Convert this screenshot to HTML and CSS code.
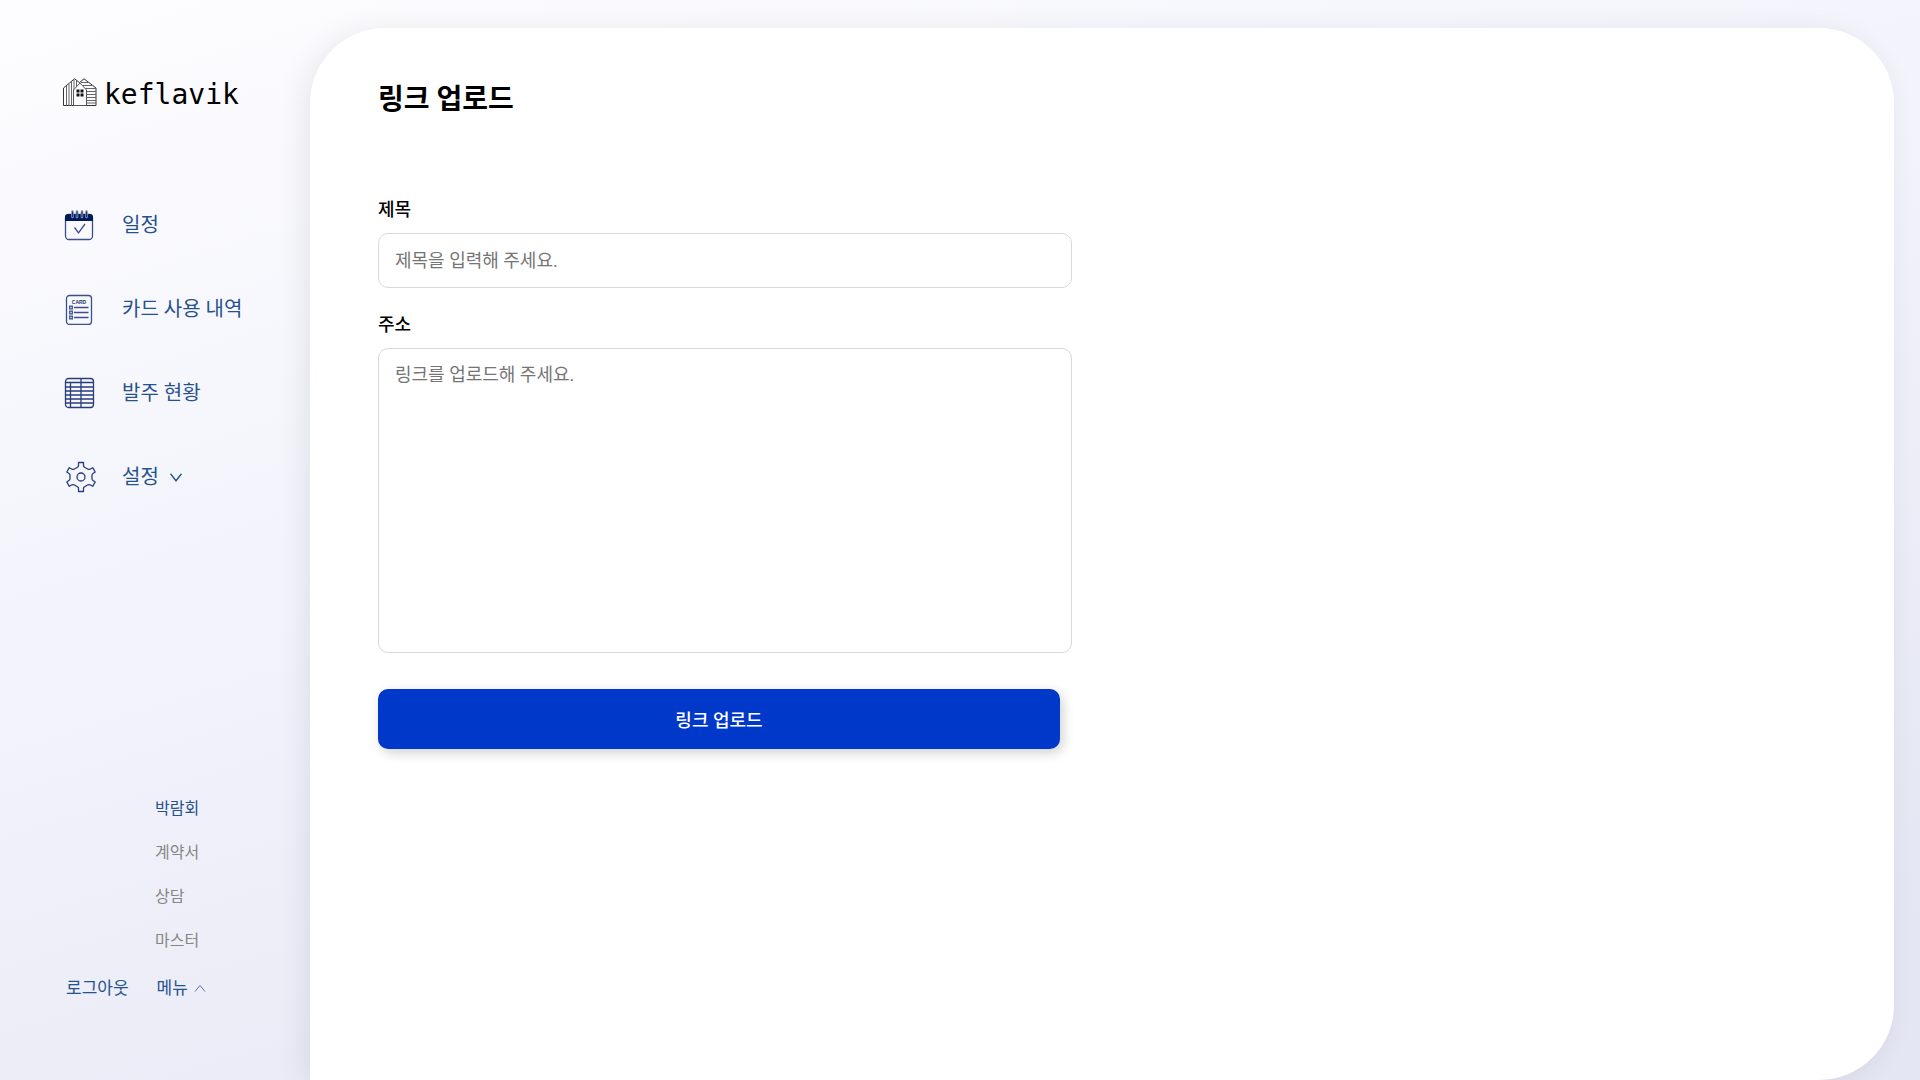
FILE: index.html
```html
<!DOCTYPE html>
<html lang="ko">
<head>
<meta charset="utf-8">
<meta name="viewport" content="width=device-width, initial-scale=1">
<title>링크 업로드</title>
<link rel="stylesheet" href="styles.css">
</head>
<body>
<div class="layout">
  <aside class="sidebar">
    <a class="logo" href="#">
      <svg width="36" height="30" viewBox="0 0 36 30" fill="none" stroke="#333">
        <path d="M1.500 27.500V10L12.500 .800L17.500 4.500L22 .800L34 10V27.500Z"/>
        <path d="M4.500 8v20M7 6v22M9.500 4v24M12 2v10M14.500 3v6" stroke="#666"/>
        <path d="M19 4.500h8M21 7.500h10M23 10.500h11M25 13.500h9M25 16.500h9M25 19.500h9M25 22.500h9M25 25h9" stroke="#666"/>
        <path d="M11.500 27.500V12L18 5L24.500 12V27.500Z" fill="#fcfcff" stroke="#555"/>
        <path d="M14.500 11.500h3v3h-3zM18.500 11.500h3v3h-3zM14.500 15.500h3v3h-3zM18.500 15.500h3v3h-3z" fill="#111" stroke="none"/>
      </svg>
      <span>keflavik</span>
    </a>
    <nav class="nav">
      <a href="#">
        <svg width="32" height="32" viewBox="0 0 32 32" fill="none" stroke="#3b4f8c" stroke-width="1.300">
          <rect x="1.500" y="5.500" width="27" height="25" rx="3.500"/>
          <path d="M1 12V8q0-3 3-3h22q3 0 3 3v4z" fill="#001a5c" stroke="none"/>
          <path d="M8.500 8V2.500M13 8V2.500M18 8V2.500M22.500 8V2.500" stroke="#8490b5" stroke-width="2.600" stroke-linecap="round"/>
          <path d="M8.500 8V2.500M13 8V2.500M18 8V2.500M22.500 8V2.500" stroke="#1d3168" stroke-width="1"/>
          <path d="M10.500 18.500l4 5.500 6.500-9"/>
        </svg>
        <span>일정</span>
      </a>
      <a href="#">
        <svg width="32" height="32" viewBox="0 0 32 32" fill="none" stroke="#3b4f8c" stroke-width="1.300">
          <rect x="2.500" y="2.500" width="25" height="29" rx="3"/>
          <path d="M10 14.500h14.500M10 19.500h14.500M10 24.500h14.500"/>
          <path d="M5.700 13.200h2.600v2.600H5.700zM5.700 18.200h2.600v2.600H5.700zM5.700 23.200h2.600v2.600H5.700z"/>
          <text x="15" y="10.500" class="icon-text">CARD</text>
        </svg>
        <span>카드 사용 내역</span>
      </a>
      <a href="#">
        <svg width="32" height="32" viewBox="0 0 32 32" fill="none" stroke="#283c7c" stroke-width="1.300">
          <rect x="1.500" y="1.500" width="28" height="29" rx="3"/>
          <path d="M1.500 5.500h28M1.500 10h28M1.500 14h28M1.500 18h28M1.500 22h28M1.500 26h28M6.500 5.500v25M17 1.500v29"/>
        </svg>
        <span>발주 현황</span>
      </a>
      <a href="#">
        <svg width="32" height="32" viewBox="0 0 32 32" fill="none" stroke="#283c7c" stroke-width="1.300" stroke-linejoin="round">
          <path d="M14.500 1.500h5v3.200q0 1 1 1.500l3.500 2q1 .500 2 0l2.700-1.500 2.500 4.300-2.200 1.500q-1 .700-1 1.800v3.400q0 1.100 1 1.800l2.200 1.500-2.500 4.300-2.700-1.500q-1-.500-2 0l-3.500 2q-1 .500-1 1.500v3.200h-5v-3.200q0-1-1-1.500l-3.500-2q-1-.500-2 0l-2.700 1.500-2.500-4.300 2.200-1.500q1-.700 1-1.800v-3.400q0-1.100-1-1.800l-2.200-1.500 2.500-4.300 2.700 1.500q1 .500 2 0l3.500-2q1-.500 1-1.500z"/>
          <circle cx="17" cy="16" r="4"/>
        </svg>
        <span>설정</span>
        <svg class="chevron" width="12" height="9" viewBox="0 0 12 9" fill="none" stroke="#26518f" stroke-width="1.400"><path d="M.500 .800l5.500 7 5.500-7"/></svg>
      </a>
    </nav>
    <div class="bottom">
      <ul class="submenu">
        <li><a class="active" href="#">박람회</a></li>
        <li><a href="#">계약서</a></li>
        <li><a href="#">상담</a></li>
        <li><a href="#">마스터</a></li>
      </ul>
      <div class="actions">
        <button type="button">로그아웃</button>
        <button type="button">메뉴
          <svg width="12" height="8" viewBox="0 0 12 8" fill="none" stroke="#5c75a5"><path d="M1 7.500l5-6 5 6"/></svg>
        </button>
      </div>
    </div>
  </aside>
  <main class="panel">
    <h1>링크 업로드</h1>
    <form class="form">
      <label for="title">제목</label>
      <input id="title" type="text" placeholder="제목을 입력해 주세요.">
      <label for="link">주소</label>
      <textarea id="link" placeholder="링크를 업로드해 주세요."></textarea>
      <button class="submit" type="button">링크 업로드</button>
    </form>
  </main>
</div>
</body>
</html>
```
FILE: styles.css
```css
* { box-sizing: border-box; }

body {
  margin: 0;
  font-family: Roboto, "Noto Sans CJK KR", sans-serif;
  color: #000;
  background: linear-gradient(163deg, #fdfdff 0%, #f2f3fb 42%, #e4e6f3 90%);
}

a { color: inherit; text-decoration: none; }

button, input, textarea { font: inherit; }

.layout {
  display: flex;
  min-height: 100vh;
  padding: 28px 26px 0 0;
}

.sidebar {
  display: flex;
  flex: 0 0 310px;
  flex-direction: column;
  padding: 50px 0 79px 62px;
  color: #26518f;
}

.logo {
  display: flex;
  align-items: center;
  gap: 6px;
  height: 34px;
  color: #000;
  font: 28px/34px "DejaVu Sans Mono", monospace;
}

.logo svg { margin-bottom: 4px; }

.nav {
  display: grid;
  gap: 52px;
  margin-top: 97px;
  padding-left: 2px;
  font-size: 20px;
  line-height: 32px;
}

.nav a {
  display: flex;
  align-items: center;
  height: 32px;
}

.nav span { margin-left: 26px; }

.chevron { margin-left: 11px; }

.icon-text {
  fill: #1d3168;
  stroke: none;
  font: bold 5px "Liberation Sans", sans-serif;
  text-anchor: middle;
}

.bottom { margin-top: auto; }

.submenu {
  display: grid;
  gap: 20px;
  margin: 0 0 22px;
  padding: 0 0 0 93px;
  list-style: none;
  color: #868686;
  font-size: 16px;
  line-height: 24px;
}

.submenu li { height: 24px; }

.submenu .active { color: #26518f; }

.actions {
  display: flex;
  gap: 28px;
  padding-left: 4px;
}

.actions button {
  display: flex;
  align-items: center;
  gap: 6px;
  padding: 0;
  border: 0;
  background: none;
  color: #26518f;
  font-size: 17px;
  line-height: 26px;
}

.panel {
  flex: 1;
  padding: 51px 68px 48px;
  border-radius: 75px 75px 75px 0;
  background: #fff;
  box-shadow: -6px 4px 30px rgba(0, 0, 0, 0.08);
}

h1 {
  margin: 0;
  font-size: 28px;
  font-weight: 700;
  line-height: 42px;
}

.form {
  display: flex;
  flex-direction: column;
  width: 48%;
  max-width: 694px;
  margin-top: 75px;
  font-size: 18px;
}

.form label {
  margin-bottom: 9px;
  font-weight: 500;
  line-height: 28px;
}

.form input,
.form textarea {
  width: 100%;
  margin: 0 0 23px;
  padding: 12px 16px;
  border: 1px solid #d9d9d9;
  border-radius: 10px;
  outline: 0;
  background: #fff;
  line-height: 28px;
  resize: none;
}

.form input { height: 55px; }

.form textarea {
  height: 305px;
  margin-bottom: 36px;
}

.form ::placeholder { color: #757575; }

.submit {
  width: calc(100% - 12px);
  height: 60px;
  padding: 0;
  border: 0;
  border-radius: 10px;
  background: #0038c9;
  box-shadow: 3px 4px 12px rgba(0, 0, 0, 0.18);
  color: #fff;
  font-weight: 500;
}
```
